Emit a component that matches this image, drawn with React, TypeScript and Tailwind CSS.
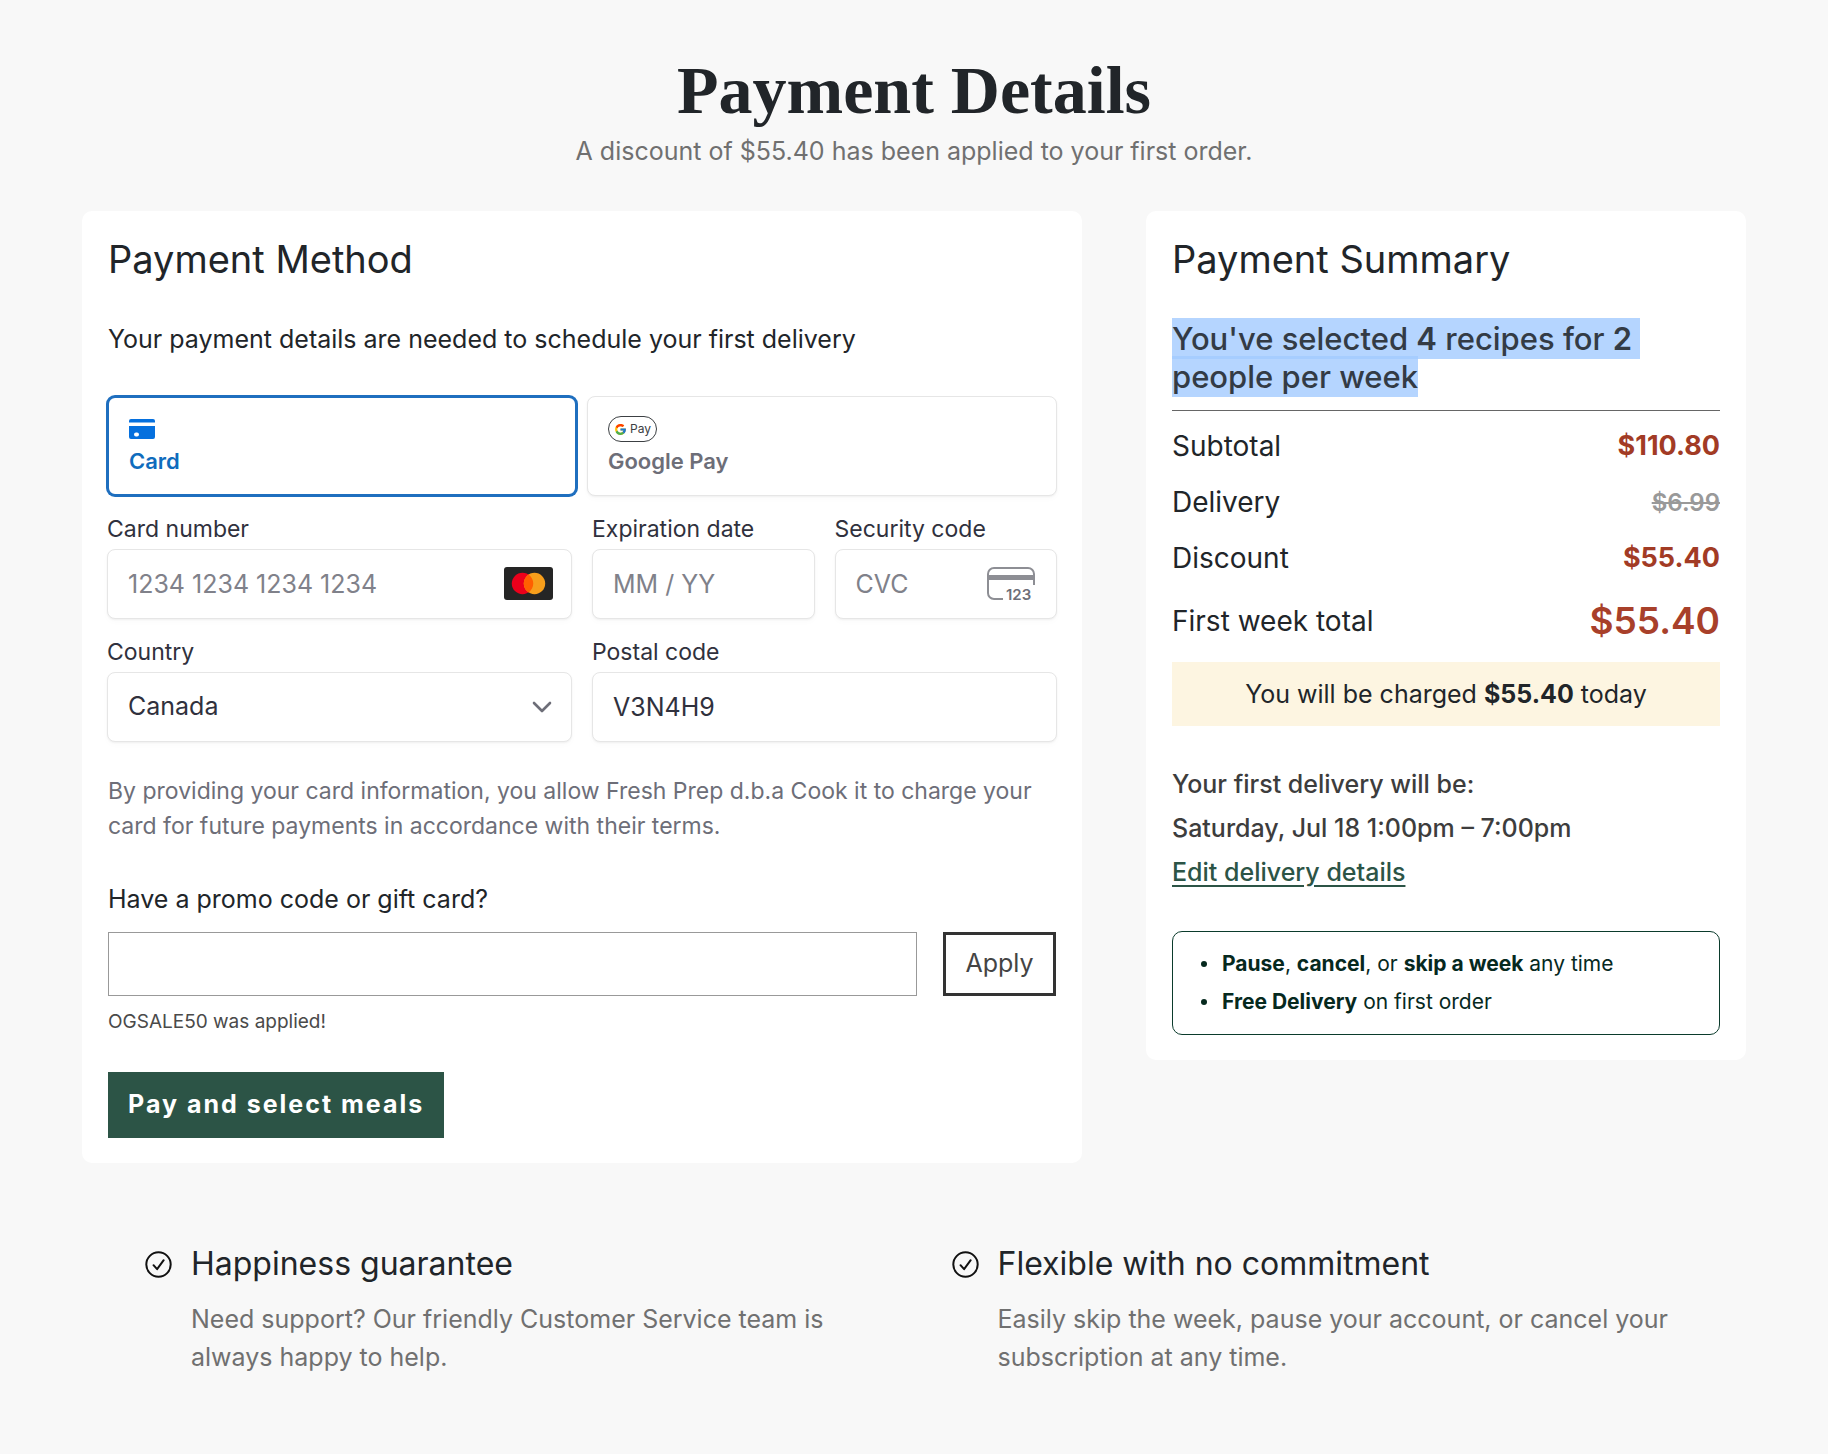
import { useState } from "react";
import type { ReactNode } from "react";
import { FcGoogle } from "react-icons/fc";

const sans = "font-['Inter','Liberation_Sans',sans-serif]";

const fieldClass =
  "w-full h-[70px] rounded-[8px] border border-[#e6e6e6] bg-white px-5 text-[25px] text-[#30313d] placeholder:text-[#80818a] shadow-[0_1px_2px_rgba(0,0,0,0.05),0_3px_6px_rgba(0,0,0,0.02)] focus:outline-none";

function CardIcon() {
  return (
    <svg width="26" height="20" viewBox="0 0 26 20" fill="#0570de">
      <path d="M2 0h22a2 2 0 0 1 2 2v1.6H0V2a2 2 0 0 1 2-2Z" />
      <path
        fillRule="evenodd"
        d="M0 7h26v11a2 2 0 0 1-2 2H2a2 2 0 0 1-2-2V7Zm7 6.5a2 2 0 1 0 0 4h1a2 2 0 1 0 0-4H7Z"
      />
    </svg>
  );
}

function GooglePayIcon() {
  return (
    <span className="flex h-[26px] w-[49px] items-center justify-center gap-[3px] rounded-full border border-[#3c4043] bg-white text-[12px] leading-none text-[#3c4043]">
      <FcGoogle size={13} />
      Pay
    </span>
  );
}

function MastercardIcon() {
  return (
    <svg width="49" height="33" viewBox="0 0 49 33">
      <rect width="49" height="33" rx="3" fill="#252525" />
      <circle cx="18.5" cy="16.5" r="10.7" fill="#eb001b" />
      <circle cx="30.5" cy="16.5" r="10.7" fill="#f79e1b" />
      <path d="M24.5 7.6a10.7 10.7 0 0 1 0 17.8 10.7 10.7 0 0 1 0-17.8Z" fill="#ff5f00" />
    </svg>
  );
}

function CvcIcon() {
  return (
    <svg width="50" height="38" viewBox="0 0 50 38" fill="none">
      <path
        d="M16 32H7a6 6 0 0 1-6-6V7a6 6 0 0 1 6-6h34a6 6 0 0 1 6 6v11"
        stroke="#8d8e94"
        strokeWidth="2"
      />
      <path d="M1 8h46v5H1z" fill="#8d8e94" />
      <text x="19" y="33" fontSize="15" fontWeight="600" fill="#6d6e78" fontFamily="Inter, sans-serif">
        123
      </text>
    </svg>
  );
}

function Field({ id, label, className, children }: { id: string; label: string; className: string; children: ReactNode }) {
  return (
    <div className={className}>
      <label htmlFor={id} className="block mb-[5px] text-[23px] leading-[30px] text-[#30313d]">
        {label}
      </label>
      <div className="relative">{children}</div>
    </div>
  );
}

function SummaryRow({ label, children }: { label: string; children: ReactNode }) {
  return (
    <div className="flex items-center justify-between h-14">
      <dt className="text-[28px]">{label}</dt>
      <dd className="text-[27px]">{children}</dd>
    </div>
  );
}

function Benefit({ children }: { children: ReactNode }) {
  return (
    <li className="flex items-center gap-[15px]">
      <span className="h-[6px] w-[6px] rounded-full bg-[#06291e]" />
      <span>{children}</span>
    </li>
  );
}

function Perk({ title, text }: { title: string; text: string }) {
  return (
    <div className="flex gap-[19px]">
      <svg className="mt-[7px] shrink-0" width="27" height="27" viewBox="0 0 27 27" fill="none" stroke="#111" strokeWidth="2">
        <circle cx="13.5" cy="13.5" r="12.2" />
        <path d="m8.5 14.2 3.6 4 6.6-9" strokeLinecap="round" strokeLinejoin="round" />
      </svg>
      <div>
        <h3 className="text-[32px] leading-[40px]">{title}</h3>
        <p className="mt-4 max-w-[680px] text-[25px] leading-[38px] text-[#707070]">{text}</p>
      </div>
    </div>
  );
}

export default function App() {
  const [method, setMethod] = useState<"card" | "gpay">("card");
  const [promo, setPromo] = useState("");
  const [postal, setPostal] = useState("V3N4H9");

  const tabClass = (active: boolean) =>
    "h-[100px] rounded-[8px] bg-white px-5 flex flex-col items-start justify-center text-[22px] font-semibold " +
    (active
      ? "border-2 border-[#1f6fbf] ring-1 ring-[#1f6fbf] text-[#0f6cbd]"
      : "border border-[#e6e6e6] text-[#6d6e78] shadow-[0_1px_2px_rgba(0,0,0,0.05),0_3px_6px_rgba(0,0,0,0.02)]");

  return (
    <div className={"min-h-screen bg-[#f8f8f8] pt-[54px] pb-16 text-[#212529] " + sans}>
      <header className="text-center">
        <h1 className="font-['Liberation_Serif',serif] text-[68px] leading-[72px] font-bold">Payment Details</h1>
        <p className="mt-2 text-[25px] leading-[34px] text-[#707070]">
          A discount of $55.40 has been applied to your first order.
        </p>
      </header>

      <main className="mx-auto mt-[43px] grid max-w-[1664px] grid-cols-[minmax(0,5fr)_minmax(0,3fr)] items-start gap-16">
        {/* Payment method */}
        <section className="rounded-[10px] bg-white px-[26px] py-[25px]">
          <h2 className="text-[38px] leading-[46px]">Payment Method</h2>
          <p className="mt-[38px] text-[25px] leading-[38px]">
            Your payment details are needed to schedule your first delivery
          </p>

          <div className="-mx-px mt-[38px]">
            <div className="grid grid-cols-2 gap-[10px]">
              <button type="button" onClick={() => setMethod("card")} className={tabClass(method === "card")}>
                <span className="flex h-[26px] items-center">
                  <CardIcon />
                </span>
                <span className="mt-1 leading-[30px]">Card</span>
              </button>
              <button type="button" onClick={() => setMethod("gpay")} className={tabClass(method === "gpay")}>
                <span className="font-normal">
                  <GooglePayIcon />
                </span>
                <span className="mt-1 leading-[30px]">Google Pay</span>
              </button>
            </div>

            <div className="mt-[18px] grid grid-cols-4 gap-x-5 gap-y-[18px]">
              <Field id="number" label="Card number" className="col-span-2">
                <input id="number" placeholder="1234 1234 1234 1234" className={fieldClass} />
                <span className="absolute right-[19px] top-[18px]">
                  <MastercardIcon />
                </span>
              </Field>
              <Field id="expiry" label="Expiration date" className="col-span-1">
                <input id="expiry" placeholder="MM / YY" className={fieldClass} />
              </Field>
              <Field id="cvc" label="Security code" className="col-span-1">
                <input id="cvc" placeholder="CVC" className={fieldClass} />
                <span className="absolute right-5 top-[18px]">
                  <CvcIcon />
                </span>
              </Field>
              <Field id="country" label="Country" className="col-span-2">
                <select id="country" className={fieldClass + " appearance-none"}>
                  <option>Canada</option>
                </select>
                <svg
                  className="pointer-events-none absolute right-5 top-[29px]"
                  width="20"
                  height="13"
                  viewBox="0 0 20 13"
                  fill="none"
                  stroke="#6d6e78"
                  strokeWidth="2.6"
                >
                  <path d="m2 2 8 8 8-8" strokeLinecap="round" strokeLinejoin="round" />
                </svg>
              </Field>
              <Field id="postal" label="Postal code" className="col-span-2">
                <input id="postal" value={postal} onChange={(e) => setPostal(e.target.value)} className={fieldClass} />
              </Field>
            </div>
          </div>

          <p className="mt-8 text-[23px] leading-[35px] text-[#6d6e78]">
            By providing your card information, you allow Fresh Prep d.b.a Cook it to charge your card for future
            payments in accordance with their terms.
          </p>

          <label htmlFor="promo" className="mt-[38px] block text-[25px] leading-[34px]">
            Have a promo code or gift card?
          </label>
          <div className="mt-4 flex gap-[26px]">
            <input
              id="promo"
              value={promo}
              onChange={(e) => setPromo(e.target.value)}
              className="h-16 min-w-0 flex-1 border border-[#999] px-4 text-[25px] focus:outline-none"
            />
            <button type="button" className="h-16 w-[113px] border-[3px] border-[#333] text-[25px] text-[#444]">
              Apply
            </button>
          </div>
          <p className="mt-3 text-[19px] leading-[28px] text-[#4a4a4a]">OGSALE50 was applied!</p>

          <button type="button" className="mt-9 h-[66px] bg-[#2c5446] px-5 text-[25px] font-bold tracking-[2px] text-white">
            Pay and select meals
          </button>
        </section>

        {/* Payment summary */}
        <aside className="rounded-[10px] bg-white px-[26px] py-[25px]">
          <h2 className="text-[38px] leading-[46px]">Payment Summary</h2>

          <p className="mt-[38px] border-b border-[#666] pb-[14px] text-[31px] leading-[38px] font-medium whitespace-pre-wrap text-[#333b45]">
            <span className="bg-[rgba(162,202,255,0.8)] py-[2px]">
              You've selected <strong className="font-semibold">4</strong> recipes for{" "}
              <strong className="font-semibold">2</strong> people per week
            </span>
          </p>

          <dl className="mt-[7px]">
            <SummaryRow label="Subtotal">
              <span className="font-bold text-[#a23b25]">$110.80</span>
            </SummaryRow>
            <SummaryRow label="Delivery">
              <s className="text-[24px] font-semibold text-[#999]">$6.99</s>
            </SummaryRow>
            <SummaryRow label="Discount">
              <span className="font-bold text-[#a23b25]">$55.40</span>
            </SummaryRow>
            <div className="flex h-[70px] items-center justify-between">
              <dt className="text-[28px]">First week total</dt>
              <dd className="text-[37px] font-semibold text-[#a8402a]">$55.40</dd>
            </div>
          </dl>

          <p className="mt-[6px] bg-[#fdf5e1] text-center text-[25px] leading-[64px]">
            You will be charged <strong>$55.40</strong> today
          </p>

          <div className="mt-9 text-[25px] leading-[44px] font-medium text-[#3d3d3d]">
            <p>Your first delivery will be:</p>
            <p>Saturday, Jul 18 1:00pm – 7:00pm</p>
            <a href="#" className="text-[#2c5446] underline underline-offset-4">
              Edit delivery details
            </a>
          </div>

          <ul className="mt-[37px] rounded-[10px] border border-[#0b3b2c] py-[13px] pl-7 text-[21px] leading-[38px] text-[#06291e]">
            <Benefit>
              <strong>Pause</strong>, <strong>cancel</strong>, or <strong>skip a week</strong> any time
            </Benefit>
            <Benefit>
              <strong>Free Delivery</strong> on first order
            </Benefit>
          </ul>
        </aside>
      </main>

      <footer className="mx-auto mt-[81px] grid max-w-[1664px] grid-cols-2 gap-3 pl-[63px]">
        <Perk title="Happiness guarantee" text="Need support? Our friendly Customer Service team is always happy to help." />
        <Perk
          title="Flexible with no commitment"
          text="Easily skip the week, pause your account, or cancel your subscription at any time."
        />
      </footer>
    </div>
  );
}
